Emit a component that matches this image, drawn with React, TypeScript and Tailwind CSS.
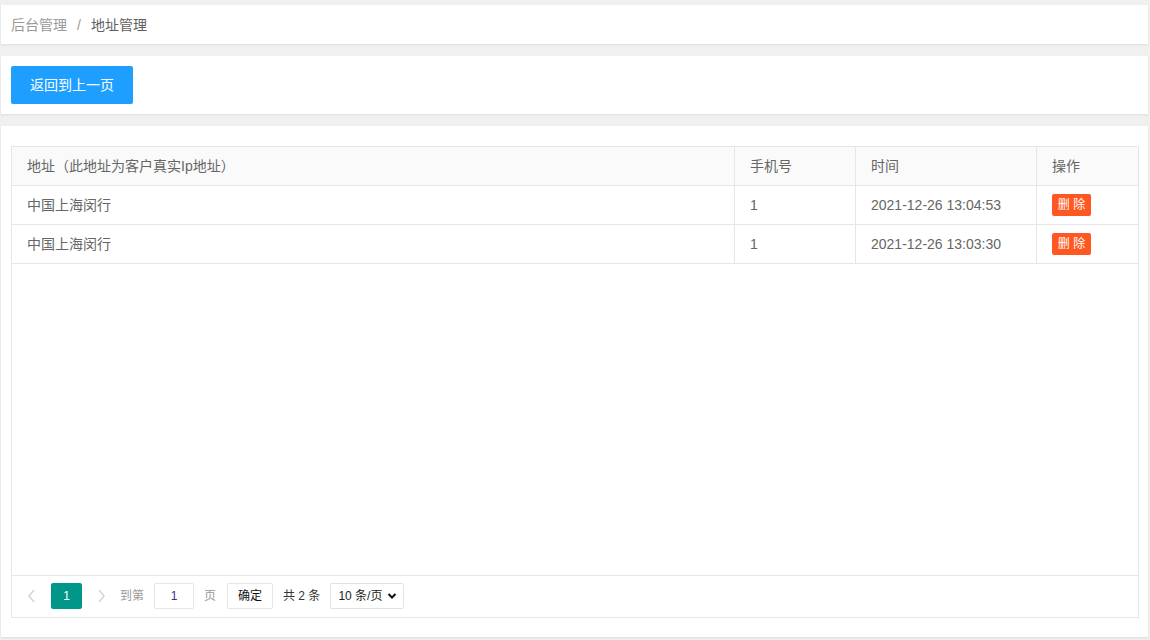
import React from "react";

const rows = [
  { addr: "中国上海闵行", phone: "1", time: "2021-12-26 13:04:53" },
  { addr: "中国上海闵行", phone: "1", time: "2021-12-26 13:03:30" },
];

export default function App() {
  return (
    <div
      className="h-[640px] w-[1150px] overflow-hidden bg-[#f0f0f0] pt-[5px] pl-px pr-[2px] text-[14px] text-[#666]"
      style={{ fontFamily: '"Liberation Sans", "Noto Sans CJK SC", sans-serif' }}
    >
      <div className="flex h-[39px] items-center bg-white px-[10px] pt-[2px] shadow-[0_1px_2px_0_rgba(0,0,0,0.08)]">
        <span className="text-[#999]">后台管理</span>
        <span className="mx-[10px] text-[#999]">/</span>
        <span className="text-[#5f5f5f]">地址管理</span>
      </div>

      <div className="mt-[12px] flex h-[58px] items-center bg-white px-[10px] shadow-[0_1px_2px_0_rgba(0,0,0,0.08)]">
        <button className="flex h-[38px] w-[122px] items-center justify-center rounded-[2px] bg-[#1E9FFF] text-[14px] text-white">
          返回到上一页
        </button>
      </div>

      <div className="mt-[12px] h-[511px] bg-white px-[10px] pt-[20px] shadow-[0_1px_2px_0_rgba(0,0,0,0.08)]">
        <div className="flex h-[472px] w-[1128px] flex-col border border-[#e6e6e6]">
          <div className="flex h-[39px] border-b border-[#e6e6e6] bg-[#fafafa]">
            <div className="flex w-[723px] items-center border-r border-[#e6e6e6] pl-[15px]">地址（此地址为客户真实Ip地址）</div>
            <div className="flex w-[121px] items-center border-r border-[#e6e6e6] pl-[15px]">手机号</div>
            <div className="flex w-[181px] items-center border-r border-[#e6e6e6] pl-[15px]">时间</div>
            <div className="flex flex-1 items-center pl-[15px]">操作</div>
          </div>
          {rows.map((r, i) => (
            <div key={i} className="flex h-[39px] border-b border-[#e6e6e6]">
              <div className="flex w-[723px] items-center border-r border-[#e6e6e6] pl-[15px]">{r.addr}</div>
              <div className="flex w-[121px] items-center border-r border-[#e6e6e6] pl-[15px]">{r.phone}</div>
              <div className="flex w-[181px] items-center border-r border-[#e6e6e6] pl-[15px]">{r.time}</div>
              <div className="flex flex-1 items-center pl-[15px]">
                <span className="flex h-[22px] w-[39px] items-center justify-center rounded-[2px] bg-[#FF5722] text-[12px] text-white">
                  删 除
                </span>
              </div>
            </div>
          ))}
          <div className="flex-1" />
          <div className="flex h-[42px] items-start border-t border-[#e6e6e6] pl-[15px] pt-[7px]">
            <div className="flex h-[26px] items-center">
              <svg width="10" height="14" viewBox="0 0 10 14" className="mr-[14px]">
                <path d="M7 1 L2 7 L7 13" fill="none" stroke="#d2d2d2" strokeWidth="1.4" />
              </svg>
              <div className="flex h-[26px] w-[31px] items-center justify-center rounded-[2px] bg-[#009688] text-[12px] text-white">1</div>
              <svg width="10" height="14" viewBox="0 0 10 14" className="ml-[14px] mr-[14px]">
                <path d="M3 1 L8 7 L3 13" fill="none" stroke="#d2d2d2" strokeWidth="1.4" />
              </svg>
              <span className="text-[12px] text-[#999]">到第</span>
              <div className="ml-[10px] flex h-[26px] w-[40px] items-center justify-center rounded-[2px] border border-[#e6e6e6] text-[12px] text-[#4b2a88]">1</div>
              <span className="ml-[10px] text-[12px] text-[#999]">页</span>
              <div className="ml-[11px] flex h-[26px] w-[46px] items-center justify-center rounded-[2px] border border-[#e6e6e6] text-[12px] text-[#111]">确定</div>
              <span className="ml-[10px] text-[12px] text-[#333]">共 2 条</span>
              <div className="ml-[10px] flex h-[26px] w-[74px] items-center justify-between rounded-[2px] border border-[#e2e2e2] pl-[7px] pr-[6px] text-[12px] text-[#222]">
                <span>10 条/页</span>
                <svg width="10" height="8" viewBox="0 0 10 8">
                  <path d="M1.5 2 L5 5.5 L8.5 2" fill="none" stroke="#111" strokeWidth="2" />
                </svg>
              </div>
            </div>
          </div>
        </div>
      </div>
    </div>
  );
}
